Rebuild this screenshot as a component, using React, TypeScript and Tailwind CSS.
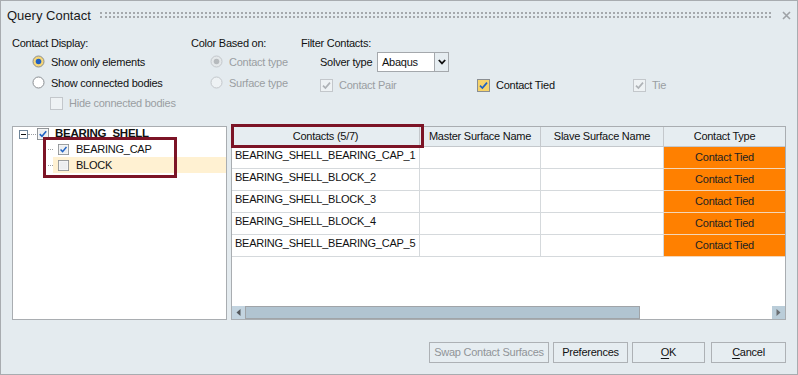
import React from 'react';

const ui = "font-['Liberation_Sans',Arial,sans-serif]";

type BoxProps = { checked?: boolean; disabled?: boolean; hot?: boolean; size?: number };

const Radio = ({ checked, disabled, hot }: BoxProps) => (
  <svg width="13" height="13" viewBox="0 0 13 13" className="shrink-0">
    <circle
      cx="6.5"
      cy="6.5"
      r="5.5"
      fill={disabled ? (checked ? '#e4e8ea' : '#eef2f4') : hot ? '#f6d675' : '#ffffff'}
      stroke={disabled ? '#c3c7cb' : '#8a8e92'}
    />
    {checked && <circle cx="6.5" cy="6.5" r="2.8" fill={disabled ? '#b6babd' : '#1f5fc0'} />}
  </svg>
);

const Check = ({ checked, disabled, hot, size = 13 }: BoxProps) => (
  <svg width={size} height={size} viewBox="0 0 13 13" className="shrink-0">
    <rect
      x="0.5"
      y="0.5"
      width="12"
      height="12"
      fill={hot ? '#f6d36a' : disabled ? '#eef2f4' : '#f6f7f8'}
      stroke={disabled ? '#c3c7cb' : '#8a8e92'}
    />
    {!hot && !disabled && <rect x="2" y="2" width="9" height="9" fill="#eceef0" />}
    {checked && (
      <path
        d="M3 6.6 L5.4 9 L10 3.6"
        fill="none"
        stroke={disabled ? '#aeb2b6' : '#1f62c4'}
        strokeWidth="1.7"
      />
    )}
  </svg>
);

const Expander = () => (
  <svg width="9" height="9" viewBox="0 0 9 9" className="shrink-0">
    <rect x="0.5" y="0.5" width="8" height="8" fill="#ffffff" stroke="#6f8599" />
    <path d="M2 4.5 H7" stroke="#111" strokeWidth="1" />
  </svg>
);

const rows = [
  'BEARING_SHELL_BEARING_CAP_1',
  'BEARING_SHELL_BLOCK_2',
  'BEARING_SHELL_BLOCK_3',
  'BEARING_SHELL_BLOCK_4',
  'BEARING_SHELL_BEARING_CAP_5',
];

const Btn = ({ children, w, disabled }: { children: React.ReactNode; w: string; disabled?: boolean }) => (
  <button
    className={`${w} h-[21px] border border-[#adb1b5] bg-[#e6edf1] text-[11px] tracking-[-0.25px] flex items-center justify-center ${
      disabled ? 'text-[#909498]' : 'text-[#111]'
    }`}
  >
    {children}
  </button>
);

export default function App() {
  return (
    <div
      className={`${ui} w-[798px] h-[375px] border border-[#a8acb0] bg-[#e4ebef] text-[#111] text-[11px] tracking-[-0.25px] flex flex-col overflow-hidden`}
    >
      {/* title bar */}
      <div className="h-[29px] flex items-center pl-[6px] pr-[6px]">
        <span className="text-[13px] tracking-normal text-[#1a1a1a]">Query Contact</span>
        <div className="ml-[9px] w-[671px] h-[6px] mt-[-1px] border-y-2 border-dotted border-[#a4a8ac]" />
        <div className="flex-1" />
        <svg width="9" height="9" viewBox="0 0 9 9" className="mt-[-1px]">
          <path d="M1 1 L8 8 M8 1 L1 8" stroke="#9ea2a6" strokeWidth="1.6" />
        </svg>
      </div>

      {/* options */}
      <div className="h-[96px] flex pl-[11px] pt-[5px] leading-[16px]">
        <div className="w-[179px] flex flex-col">
          <div className="h-[16px]">Contact Display:</div>
          <div className="h-[21px] flex items-center gap-[6px] pl-[20px]">
            <Radio checked hot />
            <span>Show only elements</span>
          </div>
          <div className="h-[21px] flex items-center gap-[6px] pl-[20px]">
            <Radio />
            <span>Show connected bodies</span>
          </div>
          <div className="h-[20px] flex items-center gap-[6px] pl-[38px] text-[#9a9ea2]">
            <Check disabled />
            <span>Hide connected bodies</span>
          </div>
        </div>
        <div className="w-[110px] flex flex-col text-[#9a9ea2]">
          <div className="h-[16px] text-[#111]">Color Based on:</div>
          <div className="h-[21px] flex items-center gap-[6px] pl-[19px]">
            <Radio checked disabled />
            <span>Contact type</span>
          </div>
          <div className="h-[21px] flex items-center gap-[6px] pl-[19px]">
            <Radio disabled />
            <span>Surface type</span>
          </div>
        </div>
        <div className="flex-1 flex flex-col">
          <div className="h-[16px]">Filter Contacts:</div>
          <div className="h-[21px] flex items-center pl-[19px]">
            <span className="w-[57px]">Solver type</span>
            <div className="flex h-[20px]">
              <div className="w-[58px] bg-white border border-[#a4a8ac] flex items-center pl-[4px] text-[11px]">Abaqus</div>
              <div className="w-[14px] border border-l-0 border-[#a4a8ac] bg-[#e6edf1] flex items-center justify-center">
                <svg width="8" height="6" viewBox="0 0 8 6">
                  <path d="M0.8 1 L4 4.4 L7.2 1" fill="none" stroke="#111" strokeWidth="1.8" />
                </svg>
              </div>
            </div>
          </div>
          <div className="h-[26px] flex items-center pl-[19px]">
            <div className="w-[157px] flex items-center gap-[6px] text-[#9a9ea2]">
              <Check checked disabled />
              <span>Contact Pair</span>
            </div>
            <div className="w-[156px] flex items-center gap-[6px]">
              <Check checked hot />
              <span>Contact Tied</span>
            </div>
            <div className="flex items-center gap-[6px] text-[#9a9ea2]">
              <Check checked disabled />
              <span>Tie</span>
            </div>
          </div>
        </div>
      </div>

      {/* panels */}
      <div className="flex gap-[4px] px-[11px]">
        {/* tree */}
        <div className="relative w-[215px] h-[194px] bg-white border border-[#a9adb1] flex flex-col">
          <div className="h-[14px] flex items-center pl-[6px]">
            <Expander />
            <div className="w-[8px] border-t border-dotted border-[#9a9ea2]" />
            <div className="ml-[1px]">
              <Check checked size={12} />
            </div>
            <span className="ml-[6px] font-bold text-[11.5px]">BEARING_SHELL</span>
          </div>
          <div className="h-[16px] flex items-center pl-[35px]">
            <div className="w-[5px] border-t border-dotted border-[#9a9ea2]" />
            <div className="flex-1 h-full flex items-center pl-[5px] gap-[7px]">
              <Check checked size={11} />
              <span>BEARING_CAP</span>
            </div>
          </div>
          <div className="h-[16px] flex items-center pl-[35px]">
            <div className="w-[5px] border-t border-dotted border-[#9a9ea2]" />
            <div className="flex-1 h-full flex items-center pl-[5px] gap-[7px] bg-[#fff1d2]">
              <Check size={11} />
              <span>BLOCK</span>
            </div>
          </div>
          <div className="absolute left-[30px] top-[10px] w-[134px] h-[41px] border-[3px] border-[#7c1426]" />
        </div>

        {/* table */}
        <div className="relative w-[555px] h-[194px] bg-white border border-[#a9adb1] flex flex-col">
          <div className="h-[20px] flex bg-[#e6edf1] border-b border-[#c4c8cc] shrink-0">
            <div className="w-[188px] border-r border-[#c4c8cc] flex items-center justify-center">Contacts (5/7)</div>
            <div className="w-[121px] border-r border-[#c4c8cc] flex items-center justify-center">Master Surface Name</div>
            <div className="w-[123px] border-r border-[#c4c8cc] flex items-center justify-center">Slave Surface Name</div>
            <div className="flex-1 flex items-center justify-center">Contact Type</div>
          </div>
          {rows.map((r) => (
            <div key={r} className="h-[22px] flex shrink-0">
              <div className="w-[188px] border-r border-b border-[#d5d9dc] pl-[3px] pt-[1px] leading-[14px] text-[11px]">{r}</div>
              <div className="w-[121px] border-r border-b border-[#d5d9dc]" />
              <div className="w-[123px] border-r border-b border-[#d5d9dc]" />
              <div className="flex-1 bg-[#ff8000] border-b border-[#f3d6b8] flex items-center justify-center text-[#222]">
                Contact Tied
              </div>
            </div>
          ))}
          <div className="flex-1" />
          <div className="h-[13px] flex shrink-0 bg-[#c3d4e0]">
            <div className="w-[13px] flex items-center justify-center">
              <svg width="5" height="7" viewBox="0 0 5 7">
                <path d="M4.5 0 L0.5 3.5 L4.5 7 Z" fill="#55595d" />
              </svg>
            </div>
            <div className="w-[395px] bg-[#b1c4d1] border border-[#a0a4a8]" />
            <div className="flex-1 bg-white" />
            <div className="w-[13px] flex items-center justify-center bg-[#bacdd9]">
              <svg width="5" height="7" viewBox="0 0 5 7">
                <path d="M0.5 0 L4.5 3.5 L0.5 7 Z" fill="#6a6e72" />
              </svg>
            </div>
          </div>
          <div className="absolute left-[-1px] top-[-3px] w-[193px] h-[24px] border-[3px] border-[#7c1426]" />
        </div>
      </div>

      {/* buttons */}
      <div className="flex justify-end pr-[11px] mt-[22px]">
        <Btn w="w-[120px]" disabled>Swap Contact Surfaces</Btn>
        <div className="ml-[4px]">
          <Btn w="w-[75px]">Preferences</Btn>
        </div>
        <div className="ml-[4px]">
          <Btn w="w-[73px]">
            <span className="underline underline-offset-2">O</span>K
          </Btn>
        </div>
        <div className="ml-[6px]">
          <Btn w="w-[75px]">
            <span className="underline underline-offset-2">C</span>ancel
          </Btn>
        </div>
      </div>
    </div>
  );
}
